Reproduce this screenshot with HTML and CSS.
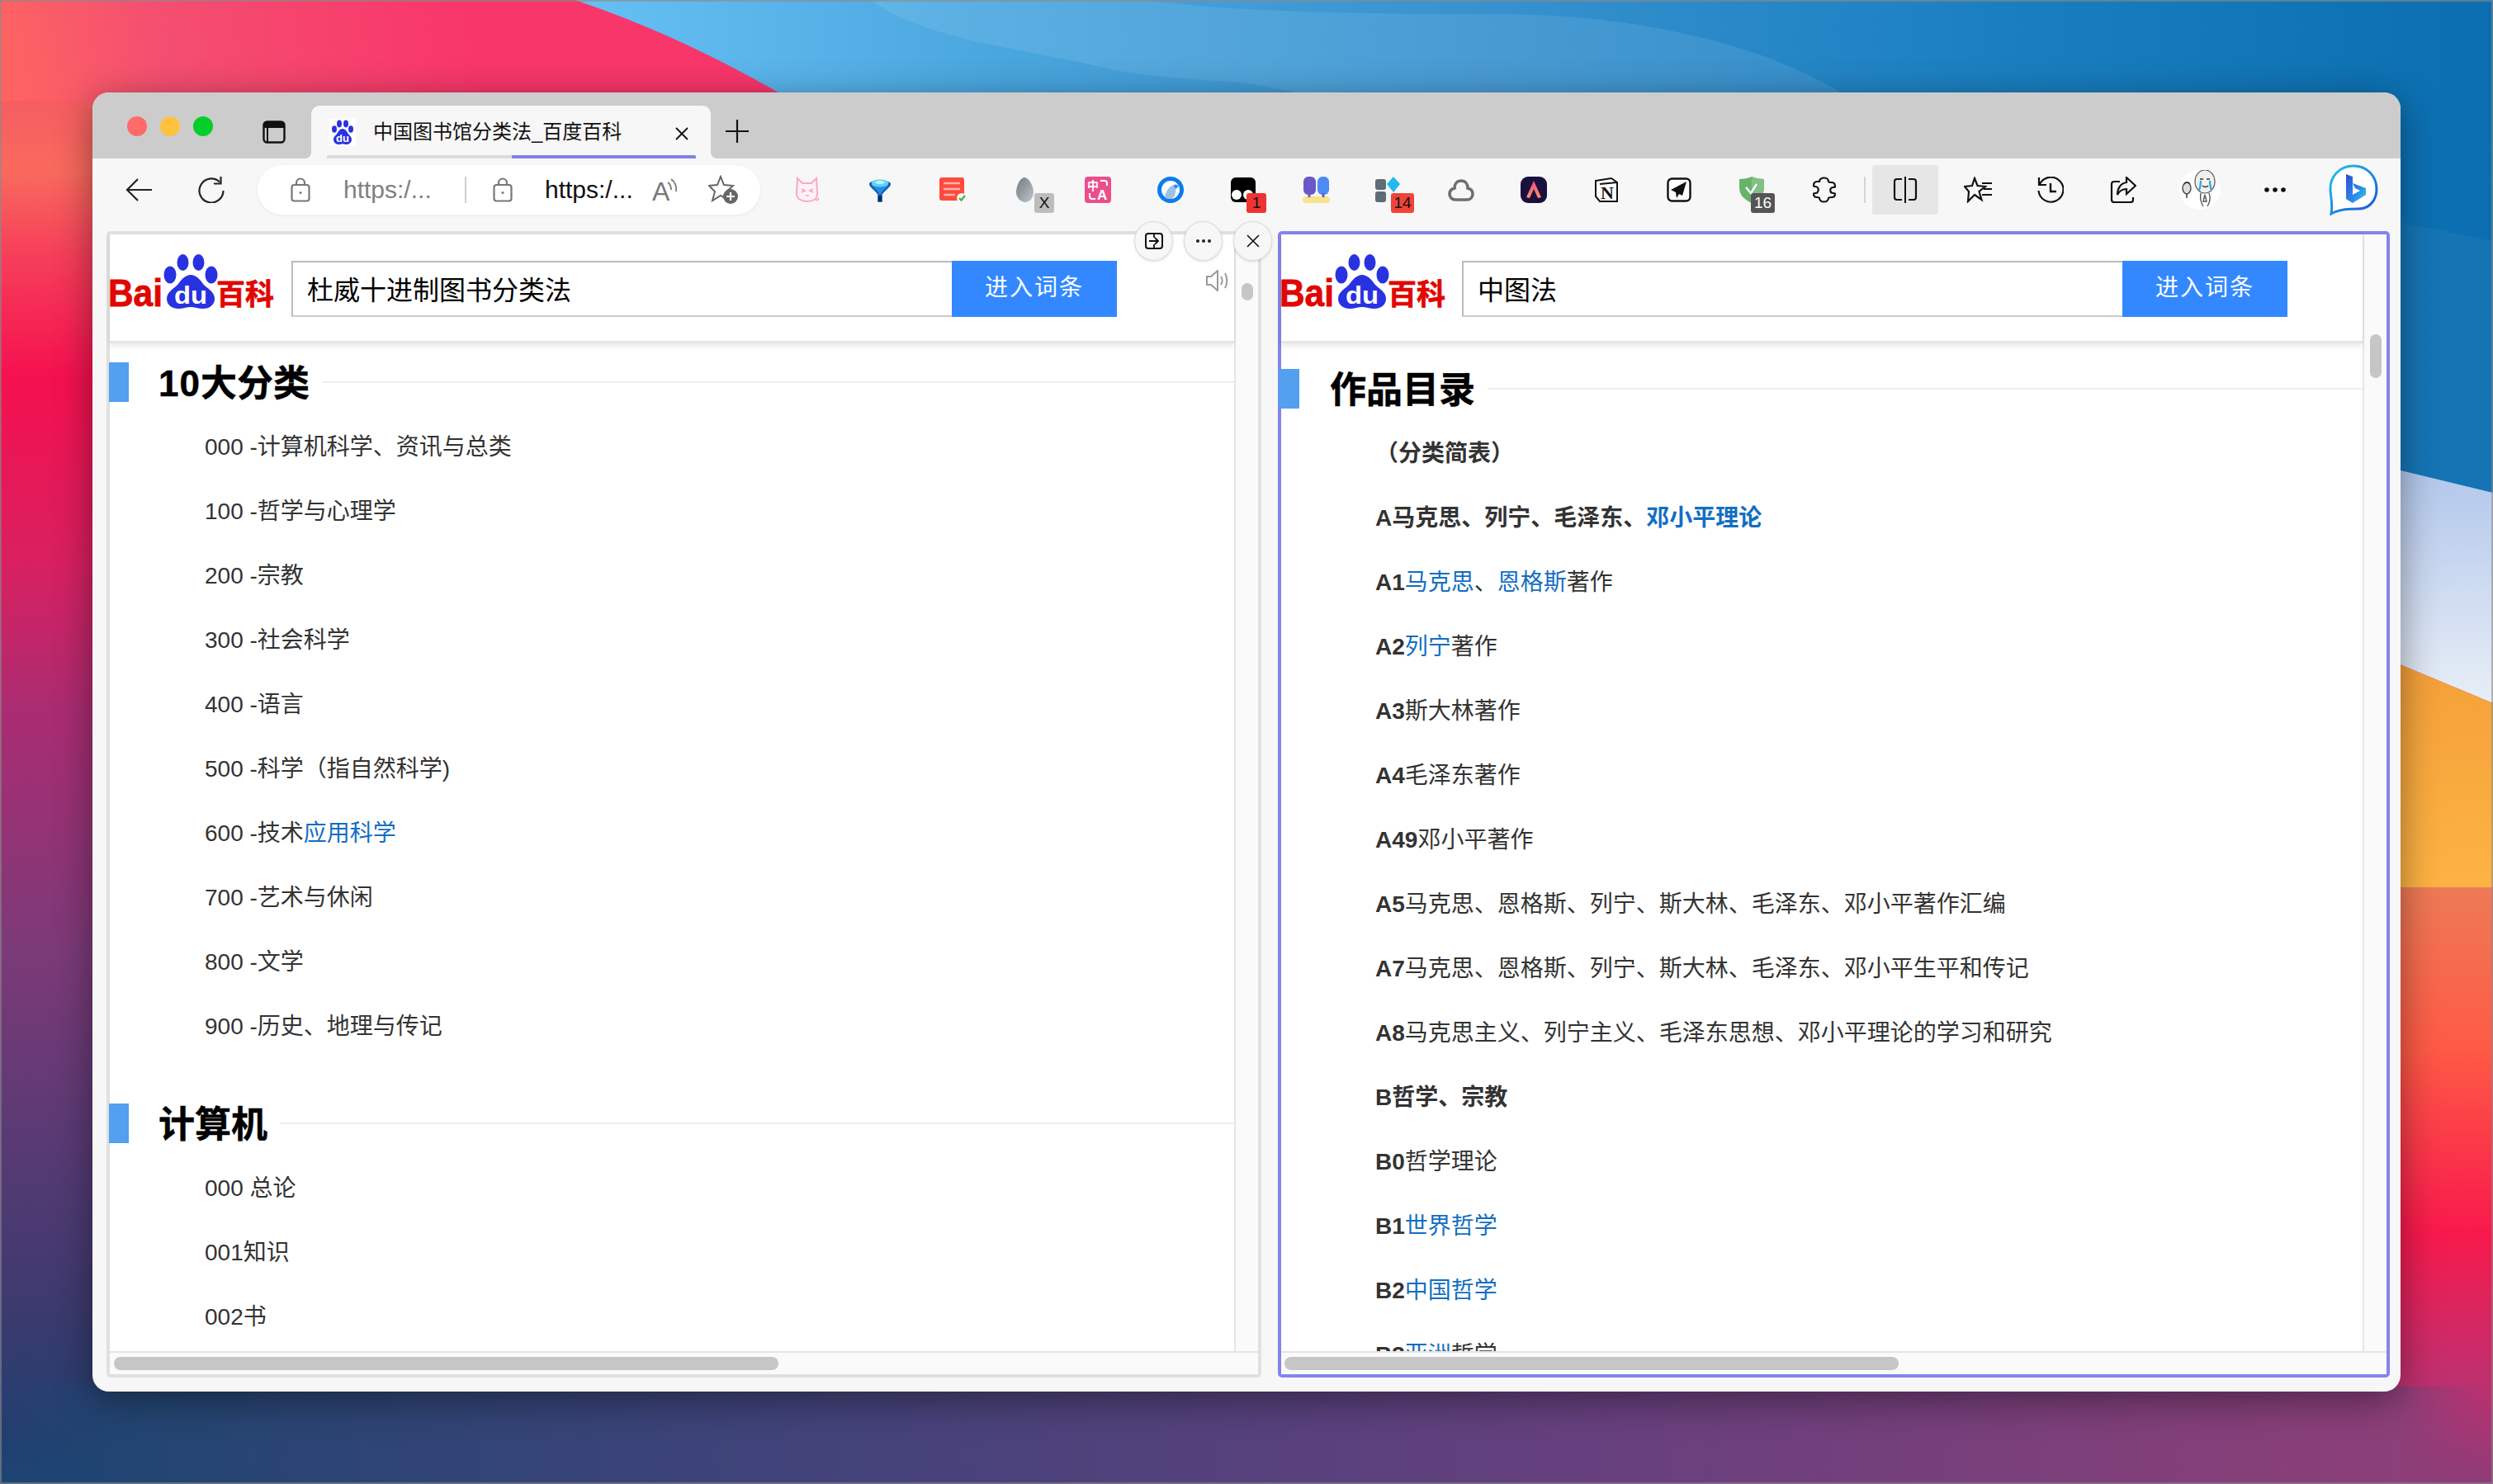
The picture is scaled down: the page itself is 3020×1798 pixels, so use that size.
FILE: index.html
```html
<!DOCTYPE html>
<html lang="zh">
<head>
<meta charset="utf-8">
<title>中国图书馆分类法_百度百科</title>
<link rel="stylesheet" href="styles.css">
</head>
<body>
<div class="desktop">
  <svg class="wallpaper" viewBox="0 0 3020 1798" aria-hidden="true">
    <defs>
      <linearGradient id="wpLeft" x1="0" y1="0" x2="0" y2="1">
        <stop offset="0" stop-color="#f04a6a"/><stop offset=".115" stop-color="#f96a5c"/><stop offset=".17" stop-color="#f6405a"/><stop offset=".255" stop-color="#f5104f"/><stop offset=".38" stop-color="#d82060"/><stop offset=".48" stop-color="#aa2c72"/><stop offset=".64" stop-color="#7c3a78"/><stop offset=".765" stop-color="#5a3a74"/><stop offset=".89" stop-color="#3a3a6e"/><stop offset=".975" stop-color="#1f4070"/><stop offset="1" stop-color="#1e4573"/>
      </linearGradient>
      <linearGradient id="wpBlue" gradientUnits="userSpaceOnUse" x1="700" y1="0" x2="3020" y2="0">
        <stop offset="0" stop-color="#66c0f5"/><stop offset=".22" stop-color="#4aa6de"/><stop offset=".48" stop-color="#3691cf"/><stop offset=".74" stop-color="#1a7fc0"/><stop offset="1" stop-color="#0a6eb0"/>
      </linearGradient>
      <linearGradient id="wpRed" gradientUnits="userSpaceOnUse" x1="0" y1="115" x2="560" y2="0">
        <stop offset="0" stop-color="#ff6560"/><stop offset=".35" stop-color="#f44f70"/><stop offset="1" stop-color="#f8366a"/>
      </linearGradient>
      <linearGradient id="wpSky" x1="0" y1="0" x2="0" y2="1">
        <stop offset="0" stop-color="#b2c7ec"/><stop offset="1" stop-color="#e8eef6"/>
      </linearGradient>
      <linearGradient id="wpOrange" x1="0" y1="0" x2="0" y2="1">
        <stop offset="0" stop-color="#f4a03a"/><stop offset="1" stop-color="#fdb343"/>
      </linearGradient>
      <linearGradient id="wpWarm" x1="0" y1="0" x2="0" y2="1">
        <stop offset="0" stop-color="#ee7a55"/><stop offset=".27" stop-color="#fe5a45"/><stop offset=".58" stop-color="#f8194c"/><stop offset=".82" stop-color="#c02f6e"/><stop offset="1" stop-color="#8d3c78"/>
      </linearGradient>
      <linearGradient id="wpBottom" x1="0" y1="0" x2="1" y2="0">
        <stop offset="0" stop-color="#1e4573" stop-opacity="0"/><stop offset=".05" stop-color="#234572"/><stop offset=".33" stop-color="#43437a"/><stop offset=".63" stop-color="#65407e"/><stop offset=".965" stop-color="#8c3f78"/><stop offset="1" stop-color="#8d3c78" stop-opacity="0"/>
      </linearGradient>
    </defs>
    <rect width="3020" height="1798" fill="url(#wpLeft)"/>
    <rect x="680" width="2340" height="600" fill="url(#wpBlue)"/>
    <path d="M1055 0C1120 50 1252 60 1350 85C1420 96 1480 98 1503 100C1540 105 1570 112 1590 118H2240C2150 60 2000 17 1811 17C1650 17 1500 15 1387 0Z" fill="#fff" opacity=".09"/>
    <path d="M0 0H697Q830 45 960 122H0Z" fill="url(#wpRed)"/>
    <path d="M2900 268L3020 292V600H2900Z" fill="#fff" opacity=".04"/>
    <path d="M2900 568L3020 597V852L2900 802Z" fill="url(#wpSky)"/>
    <path d="M2900 802L3020 852V1076H2900Z" fill="url(#wpOrange)"/>
    <rect x="2900" y="1075" width="120" height="723" fill="url(#wpWarm)"/>
    <rect x="20" y="1680" width="2990" height="118" fill="url(#wpBottom)"/>
    <rect width="3020" height="1798" fill="none" stroke="#8a8a8a" stroke-opacity=".6" stroke-width="4"/>
  </svg>

  <div class="window">
    <div class="tabstrip">
      <div class="lights">
        <span class="light light-red"></span>
        <span class="light light-yellow"></span>
        <span class="light light-green"></span>
      </div>
      <svg class="panel-icon" viewBox="0 0 28 28"><rect x="1.500" y="1.500" width="25" height="25" rx="4" fill="none" stroke="#111" stroke-width="2.400"/><path d="M1.500 9V5.500a4 4 0 0 1 4-4h17a4 4 0 0 1 4 4V9Z" fill="#111"/><path d="M6 9v17" stroke="#111" stroke-width="2"/></svg>
      <div class="tab">
        <svg class="favicon" viewBox="0 0 32 32"><rect width="32" height="32" fill="#fff"/><ellipse cx="12" cy="6" rx="3" ry="4.400" fill="#2932e1"/><ellipse cx="20" cy="6" rx="3" ry="4.400" fill="#2932e1"/><ellipse cx="6" cy="12.500" rx="3" ry="4.200" fill="#2932e1"/><ellipse cx="26" cy="12.500" rx="3" ry="4.200" fill="#2932e1"/><path d="M16 12c3 0 5 3 6.500 5.500 1.500 2.500 4.500 4 4.500 7.500 0 3.500-3 6-6 6-2 0-3.500-.8-5-.8s-3 .8-5 .8c-3 0-6-2.500-6-6 0-3.500 3-5 4.500-7.500C11 15 13 12 16 12Z" fill="#2932e1"/><text x="16" y="28" class="fav-du">du</text></svg>
        <span class="tab-title">中国图书馆分类法_百度百科</span>
        <svg class="tab-close" viewBox="0 0 16 16"><path d="M1 1l14 14M15 1L1 15" stroke="#111" stroke-width="1.800" fill="none"/></svg>
        <div class="tab-progress"><span class="tab-progress-fill"></span></div>
      </div>
      <svg class="new-tab" viewBox="0 0 28 28"><path d="M14 0v28M0 14h28" stroke="#111" stroke-width="2.200"/></svg>
    </div>

    <div class="toolbar">
      <div class="tb-item"><svg width="32" height="28" viewBox="0 0 32 28"><path d="M15 1L2 14l13 13M2 14h30" fill="none" stroke="#222" stroke-width="2.200"/></svg></div>
      <div class="tb-item"><svg width="32" height="32" viewBox="0 0 32 32"><path d="M26 6.500A14.500 14.500 0 1 0 30.500 17" fill="none" stroke="#222" stroke-width="2.200"/><path d="M27.500 0v8.500H19" fill="none" stroke="#222" stroke-width="2.200"/></svg></div>

      <div class="address">
        <svg class="lock" viewBox="0 0 24 30"><rect x="1.500" y="9" width="21" height="19.500" rx="3" fill="none" stroke="#777" stroke-width="2.200"/><path d="M7 9V6.500a5 5 0 0 1 10 0V9" fill="none" stroke="#777" stroke-width="2.200"/><circle cx="12" cy="18.500" r="1.500" fill="#777"/></svg>
        <span class="addr-text addr-dim">https:/...</span>
        <span class="addr-sep"></span>
        <svg class="lock" viewBox="0 0 24 30"><rect x="1.500" y="9" width="21" height="19.500" rx="3" fill="none" stroke="#777" stroke-width="2.200"/><path d="M7 9V6.500a5 5 0 0 1 10 0V9" fill="none" stroke="#777" stroke-width="2.200"/><circle cx="12" cy="18.500" r="1.500" fill="#777"/></svg>
        <span class="addr-text addr-main">https:/...</span>
        <svg class="read-aloud" viewBox="0 -4 32 40"><text x="0" y="27" class="aloud-a">A</text><path d="M19 5c3 2 4 5 4 9M23 1c4 3 7 8 6 15" fill="none" stroke="#777" stroke-width="1.800"/></svg>
        <svg class="fav-add" viewBox="0 0 36 36"><path d="M15 2l4 10 11 1-8 7 3 11-10-6-10 6 3-11-7-7 10-1Z" fill="none" stroke="#666" stroke-width="2"/><circle cx="27" cy="26" r="9" fill="#666"/><path d="M27 21v10M22 26h10" stroke="#fff" stroke-width="2.200"/></svg>
      </div>

      <div class="tb-item tb-first"><svg width="30" height="32" viewBox="0 0 30 32"><path d="M3 2l6 6h11l6-6 1 19c0 6-5 9-12 9S2 27 2 21Z" fill="#fff3f7" stroke="#ffa6c2" stroke-width="2"/><path d="M8 15l4 2-4 2M22 15l-4 2 4 2M13 23h4" fill="none" stroke="#ff9ab9" stroke-width="1.600"/><path d="M25 28c2 1 3 0 4-2" fill="none" stroke="#ffa6c2" stroke-width="2"/></svg></div>
      <div class="tb-item"><svg width="28" height="30" viewBox="0 0 28 30"><path d="M1 8C1 2 27 2 27 8 27 12 19 16 16.500 21V29.500H11.500V21C9 16 1 12 1 8Z" fill="#0b55b8"/><path d="M3 9C8 14 12 17 14 22 16 17 20 14 25 9Z" fill="#1f8fe6"/><path d="M11.500 22H16.500V29.500H11.500Z" fill="#0a2f63"/><ellipse cx="14" cy="7" rx="10.500" ry="4.500" fill="#5fd0f6"/><ellipse cx="14" cy="6" rx="6" ry="2.200" fill="#bdeeff"/></svg></div>
      <div class="tb-item"><svg width="34" height="32" viewBox="0 0 34 32"><rect x="1" y="1" width="30" height="28" rx="3" fill="#ff4a3c"/><path d="M6 8h20M6 15h20M6 22h14" stroke="#ffb5ab" stroke-width="2.400"/><circle cx="28" cy="26" r="6" fill="#f7f7f7"/><path d="M25 26l2.500 2.500L32 23" fill="none" stroke="#4cb050" stroke-width="2.400"/></svg></div>
      <div class="tb-item"><svg width="22" height="30" viewBox="0 0 22 30"><defs><linearGradient id="eggGrad" x1="0" y1="0" x2="1" y2="1"><stop offset="0" stop-color="#707a80"/><stop offset="1" stop-color="#c2c6c9"/></linearGradient></defs><path d="M10 0c5 0 11 10 11 18 0 7-5 12-10 12S0 25 0 18C0 10 5 0 10 0Z" fill="url(#eggGrad)"/></svg><span class="badge badge-grey">X</span></div>
      <div class="tb-item"><svg width="32" height="32" viewBox="0 0 32 32"><rect width="32" height="32" rx="4" fill="#ec4e8c"/><text x="3" y="16" class="pink-cn">中</text><text x="15" y="28" class="pink-en">A</text><path d="M19 5h5q3 0 3 3v3" fill="none" stroke="#fff" stroke-width="2"/><path d="M6 20v4q0 3 3 3h4" fill="none" stroke="#fff" stroke-width="2"/></svg></div>
      <div class="tb-item"><svg width="32" height="32" viewBox="0 0 32 32"><circle cx="16" cy="16" r="16" fill="#0c7bef"/><circle cx="16" cy="16" r="11" fill="#fff"/><path d="M9 25c1-8 6-14 13-16 2 0 4 1 5 4-3 0-5 2-5 5 0 4-2 8-5 9-3 0-6 0-8-2Z" fill="#9cc2e6"/><path d="M20 11c2-1 4 0 5 1l-3 2Z" fill="#0c7bef"/></svg></div>
      <div class="tb-item"><svg width="30" height="30" viewBox="0 0 30 30"><rect width="30" height="30" rx="6" fill="#000"/><circle cx="7" cy="21" r="6" fill="#fff"/><circle cx="21" cy="21" r="6" fill="#fff"/></svg><span class="badge badge-red">1</span></div>
      <div class="tb-item"><svg width="33" height="32" viewBox="0 0 33 32"><rect x="1" width="15" height="22" rx="6" fill="#6a58c6"/><rect x="18" width="14" height="22" rx="6" fill="#4b8cf0"/><rect y="24" width="33" height="8" rx="4" fill="#fbe28c"/><path d="M8 20v5M25 20v5" stroke="#6a58c6" stroke-width="3"/></svg></div>
      <div class="tb-item"><svg width="32" height="32" viewBox="0 0 32 32"><rect y="3" width="13" height="13" rx="3" fill="#5f6b75"/><rect y="18" width="13" height="13" rx="3" fill="#5f6b75"/><path d="M22 0l8 9-8 10-8-10Z" fill="#22b8f0"/></svg><span class="badge badge-orange">14</span></div>
      <div class="tb-item"><svg width="32" height="27" viewBox="0 0 32 27"><path d="M16 2c5 0 8 4 8 9 4 1 6 4 6 7 0 4-3 7-7 7H9c-4 0-7-3-7-7 0-3 2-6 6-7 0-5 3-9 8-9Z" fill="none" stroke="#6f6f6f" stroke-width="3.600"/></svg></div>
      <div class="tb-item"><svg width="32" height="32" viewBox="0 0 32 32"><defs><linearGradient id="arcGrad" x1="0" y1="0" x2="0" y2="1"><stop offset="0" stop-color="#f04b7a"/><stop offset="1" stop-color="#fb9368"/></linearGradient></defs><rect width="32" height="32" rx="9" fill="#1a1040"/><path d="M16 5l9 20-4 1-5-11-5 11-4-1Z" fill="url(#arcGrad)"/></svg></div>
      <div class="tb-item"><svg width="30" height="32" viewBox="0 0 30 32"><path d="M2 5l19-3 7 5v23H7l-5-6Z" fill="#fff" stroke="#111" stroke-width="2"/><path d="M7 9l21-2" stroke="#111" stroke-width="2"/><text x="8" y="27" class="notion-n">N</text></svg></div>
      <div class="tb-item"><svg width="30" height="30" viewBox="0 0 30 30"><rect x="1.500" y="1.500" width="27" height="27" rx="5" fill="#fff" stroke="#111" stroke-width="2.400"/><path d="M24 5L5 15l6 3 1 7 3-5 4 2Z" fill="#111"/></svg></div>
      <div class="tb-item"><svg width="32" height="32" viewBox="0 0 32 32"><path d="M1 3c5 0 11-1 15-3 4 2 10 3 15 3v10c0 9-6 15-15 19C7 28 1 22 1 13Z" fill="#68b36a"/><path d="M16 0c4 2 10 3 15 3v10c0 9-6 15-15 19Z" fill="#82c085"/><path d="M9 13l6 7 7-11" fill="none" stroke="#fff" stroke-width="2.400"/></svg><span class="badge badge-dark">16</span></div>
      <div class="tb-item"><svg width="30" height="32" viewBox="0 0 30 32"><path d="M9 6c0-6 11-6 11 0 0 1 2 1 4 1 3 0 4 2 4 5 0 1-1 1-2 1-5 0-5 7 0 7 1 0 2 0 2 1 0 3-1 4-4 4-2 0-4 0-4 1 0 6-11 6-11 0 0-1-1-1-3-1-3 0-4-2-4-4 0-1 1-1 2-1 5 0 5-8 0-8-1 0-2 0-2-1 0-3 1-5 4-5 2 0 3 0 3 0Z" fill="none" stroke="#111" stroke-width="2.200"/></svg></div>
      <span class="tb-sep"></span>
      <div class="tb-item tb-active"><svg width="30" height="32" viewBox="0 0 30 32"><path d="M11 3H5a3 3 0 0 0-3 3v19a3 3 0 0 0 3 3h6M19 3h6a3 3 0 0 1 3 3v19a3 3 0 0 1-3 3h-6" fill="none" stroke="#111" stroke-width="2.200"/><path d="M15 0v32" stroke="#111" stroke-width="2"/></svg></div>
      <div class="tb-item tb-after-split"><svg width="34" height="32" viewBox="0 0 34 32"><path d="M13 2l3.500 9 9.500 1-7.500 6 3 10-8.500-6-8 8 1-12-5-6 9-1Z" fill="none" stroke="#111" stroke-width="2.200"/><path d="M22 8h12M24 15h10M22 22h12" stroke="#111" stroke-width="2.200"/></svg></div>
      <div class="tb-item"><svg width="32" height="32" viewBox="0 0 32 32"><path d="M3 9A15 15 0 1 1 1.500 17" fill="none" stroke="#111" stroke-width="2.200"/><path d="M2 1v9h9" fill="none" stroke="#111" stroke-width="2.200"/><path d="M16 8v10h7" fill="none" stroke="#111" stroke-width="2.400"/></svg></div>
      <div class="tb-item"><svg width="32" height="32" viewBox="0 0 32 32"><path d="M12 6H5a3 3 0 0 0-3 3v19a3 3 0 0 0 3 3h20a3 3 0 0 0 3-3v-3" fill="none" stroke="#111" stroke-width="2.200"/><path d="M20 1l11 10-11 10v-6c-6 0-9 3-11 7 0-8 4-14 11-15Z" fill="none" stroke="#111" stroke-width="2.200"/></svg></div>
      <div class="tb-item tb-avatar"><svg width="50" height="48" viewBox="0 0 50 48"><ellipse cx="25" cy="24" rx="25" ry="24" fill="#fff"/><ellipse cx="31" cy="14" rx="12" ry="14" fill="#f1f1ec" stroke="#555" stroke-width="1.200"/><path d="M25 11h4M33 11h4M28 19c2 2 5 2 7 0" fill="none" stroke="#333" stroke-width="1.400"/><path d="M26 13c0 5-1 9-2 12M37 13c0 5 1 9 2 11" fill="none" stroke="#2aa3ee" stroke-width="2.200"/><path d="M26 28c-1 5 0 11 3 16M36 28c2 5 1 11-2 16M31 30l-2 8 4 0Z" fill="none" stroke="#555" stroke-width="1.400"/><ellipse cx="9" cy="22" rx="5" ry="7" fill="#ddd" stroke="#444" stroke-width="1.400"/><path d="M6 17c2-3 5-3 7 0M9 29v5" fill="none" stroke="#333" stroke-width="1.400"/></svg></div>
      <div class="tb-item tb-dots"><svg width="28" height="8" viewBox="0 0 28 8"><circle cx="4" cy="4" r="2.800" fill="#111"/><circle cx="14" cy="4" r="2.800" fill="#111"/><circle cx="24" cy="4" r="2.800" fill="#111"/></svg></div>
      <div class="tb-item tb-bing"><svg width="60" height="62" viewBox="0 0 60 62"><defs><linearGradient id="bingEdge" x1="0" y1="0" x2="1" y2="1"><stop offset="0" stop-color="#22c6ee"/><stop offset="1" stop-color="#1c4fd0"/></linearGradient><linearGradient id="bingB" x1="0" y1="0" x2="1" y2="1"><stop offset="0" stop-color="#2a4fd8"/><stop offset=".6" stop-color="#2a8ae8"/><stop offset="1" stop-color="#35d2e6"/></linearGradient></defs><path d="M30 2C46 2 58 14 58 30 58 45 48 54 36 54 26 54 13 54 3 60 5 50 3 44 2 32 1 14 14 2 30 2Z" fill="#fff" stroke="url(#bingEdge)" stroke-width="3"/><path d="M21 12l8 3v22l9-5-6-3-3-6 16 6v8L29 47l-8-5Z" fill="url(#bingB)"/></svg></div>
    </div>

    <div class="panes">
      <section class="pane pane-left">
        <div class="pane-main">
          <div class="viewport">
            <header class="pane-header">
              <svg class="logo" viewBox="0 0 201 78"><text x="0" y="63" class="logo-bai" textLength="66" lengthAdjust="spacingAndGlyphs">Bai</text><ellipse cx="90.500" cy="10" rx="7" ry="10" fill="#2932e1"/><ellipse cx="109.500" cy="10" rx="7" ry="10" fill="#2932e1"/><ellipse cx="75" cy="25" rx="7.500" ry="10.500" fill="#2932e1"/><ellipse cx="125" cy="25" rx="7.500" ry="10.500" fill="#2932e1"/><path d="M100 25c6 0 11 5 15 11 4 5 14 9 14 18 0 8-7 12-14 12-6 0-10-2-15-2s-9 2-15 2c-7 0-14-4-14-12 0-9 10-13 14-18 4-6 9-11 15-11Z" fill="#2932e1"/><text x="100" y="60" class="logo-du" textLength="40" lengthAdjust="spacingAndGlyphs">du</text><text x="131" y="61" class="logo-cn">百科</text></svg>
              <div class="search-input">杜威十进制图书分类法</div>
              <div class="search-button">进入词条</div>
              <svg class="speaker" viewBox="0 0 30 26"><path d="M2 8h5l8-7v24l-8-7H2Z" fill="none" stroke="#999" stroke-width="2"/><path d="M19 8c2 3 2 7 0 10M24 4c3 5 3 13 0 18" fill="none" stroke="#999" stroke-width="2"/></svg>
            </header>
            <div class="article article-left">
              <h2 class="heading"><span class="marker"></span><span class="heading-text"><span class="heading-num">10</span>大分类</span><span class="heading-line"></span></h2>
              <p class="row">000 -计算机科学、资讯与总类</p>
              <p class="row">100 -哲学与心理学</p>
              <p class="row">200 -宗教</p>
              <p class="row">300 -社会科学</p>
              <p class="row">400 -语言</p>
              <p class="row">500 -科学（指自然科学)</p>
              <p class="row">600 -技术<a class="link">应用科学</a></p>
              <p class="row">700 -艺术与休闲</p>
              <p class="row">800 -文学</p>
              <p class="row">900 -历史、地理与传记</p>
              <h2 class="heading heading-second"><span class="marker"></span><span class="heading-text">计算机</span><span class="heading-line"></span></h2>
              <p class="row">000 总论</p>
              <p class="row">001知识</p>
              <p class="row">002书</p>
            </div>
          </div>
          <div class="vtrack"><span class="vthumb vthumb-left"></span></div>
        </div>
        <div class="htrack"><span class="hthumb hthumb-left"></span></div>
      </section>

      <section class="pane pane-right">
        <div class="pane-main">
          <div class="viewport">
            <header class="pane-header">
              <svg class="logo" viewBox="0 0 201 78"><text x="0" y="63" class="logo-bai" textLength="66" lengthAdjust="spacingAndGlyphs">Bai</text><ellipse cx="90.500" cy="10" rx="7" ry="10" fill="#2932e1"/><ellipse cx="109.500" cy="10" rx="7" ry="10" fill="#2932e1"/><ellipse cx="75" cy="25" rx="7.500" ry="10.500" fill="#2932e1"/><ellipse cx="125" cy="25" rx="7.500" ry="10.500" fill="#2932e1"/><path d="M100 25c6 0 11 5 15 11 4 5 14 9 14 18 0 8-7 12-14 12-6 0-10-2-15-2s-9 2-15 2c-7 0-14-4-14-12 0-9 10-13 14-18 4-6 9-11 15-11Z" fill="#2932e1"/><text x="100" y="60" class="logo-du" textLength="40" lengthAdjust="spacingAndGlyphs">du</text><text x="131" y="61" class="logo-cn">百科</text></svg>
              <div class="search-input">中图法</div>
              <div class="search-button">进入词条</div>
            </header>
            <div class="article article-right">
              <h2 class="heading"><span class="marker"></span><span class="heading-text">作品目录</span><span class="heading-line"></span></h2>
              <p class="row row-strong">（分类简表）</p>
              <p class="row row-strong">A马克思、列宁、毛泽东、<a class="link">邓小平理论</a></p>
              <p class="row"><b>A1</b><a class="link">马克思</a>、<a class="link">恩格斯</a>著作</p>
              <p class="row"><b>A2</b><a class="link">列宁</a>著作</p>
              <p class="row"><b>A3</b>斯大林著作</p>
              <p class="row"><b>A4</b>毛泽东著作</p>
              <p class="row"><b>A49</b>邓小平著作</p>
              <p class="row"><b>A5</b>马克思、恩格斯、列宁、斯大林、毛泽东、邓小平著作汇编</p>
              <p class="row"><b>A7</b>马克思、恩格斯、列宁、斯大林、毛泽东、邓小平生平和传记</p>
              <p class="row"><b>A8</b>马克思主义、列宁主义、毛泽东思想、邓小平理论的学习和研究</p>
              <p class="row row-strong">B哲学、宗教</p>
              <p class="row"><b>B0</b>哲学理论</p>
              <p class="row"><b>B1</b><a class="link">世界哲学</a></p>
              <p class="row"><b>B2</b><a class="link">中国哲学</a></p>
              <p class="row"><b>B3</b><a class="link">亚洲</a>哲学</p>
            </div>
          </div>
          <div class="vtrack"><span class="vthumb vthumb-right"></span></div>
        </div>
        <div class="htrack"><span class="hthumb hthumb-right"></span></div>
      </section>
    </div>

    <div class="float-actions">
      <span class="float-btn"><svg width="22" height="20" viewBox="0 0 22 20"><rect x="1" y="1" width="20" height="18" rx="3" fill="none" stroke="#111" stroke-width="2"/><path d="M11 1v5M11 14v5M5 10h11M12 6l4 4-4 4" fill="none" stroke="#111" stroke-width="1.800"/></svg></span>
      <span class="float-btn"><svg width="20" height="6" viewBox="0 0 20 6"><circle cx="3" cy="3" r="2" fill="#222"/><circle cx="10" cy="3" r="2" fill="#222"/><circle cx="17" cy="3" r="2" fill="#222"/></svg></span>
      <span class="float-btn"><svg width="16" height="16" viewBox="0 0 16 16"><path d="M1 1l14 14M15 1L1 15" stroke="#111" stroke-width="1.600" fill="none"/></svg></span>
    </div>
  </div>
</div>
</body>
</html>
```
FILE: styles.css
```css
* { box-sizing: border-box; }
html, body { margin: 0; padding: 0; }
body {
  font-family: "Liberation Sans", "Noto Sans CJK SC", sans-serif;
  color: #333;
}
.desktop {
  position: relative;
  width: 3020px;
  height: 1798px;
  overflow: hidden;
}
.wallpaper { position: absolute; inset: 0; width: 3020px; height: 1798px; display: block; }

/* window */
.window {
  position: absolute;
  left: 112px;
  top: 112px;
  width: 2796px;
  height: 1574px;
  border-radius: 20px;
  background: #f7f7f7;
  box-shadow: 0 10px 46px rgba(0, 0, 0, .42);
  display: flex;
  flex-direction: column;
  overflow: hidden;
}

/* tab strip */
.tabstrip {
  height: 80px;
  flex: none;
  background: #ccc;
  display: flex;
  align-items: flex-start;
  padding-left: 42px;
}
.lights { display: flex; gap: 16px; margin-top: 29px; }
.light { width: 24px; height: 24px; border-radius: 50%; }
.light-red { background: #ff6a6a; }
.light-yellow { background: #fec23f; }
.light-green { background: #03cf2b; }
.panel-icon { width: 28px; height: 28px; margin: 34px 0 0 60px; flex: none; }
.tab {
  position: relative;
  width: 484px;
  height: 64px;
  margin: 16px 0 0 31px;
  padding: 0 24px 0 22px;
  background: #f7f7f7;
  border-radius: 10px 10px 0 0;
  display: flex;
  align-items: center;
  flex: none;
}
.tab::before, .tab::after {
  content: "";
  position: absolute;
  bottom: 0;
  width: 8px;
  height: 8px;
}
.tab::before { left: -8px; background: radial-gradient(circle at 0 0, transparent 8px, #f7f7f7 8px); }
.tab::after { right: -8px; background: radial-gradient(circle at 100% 0, transparent 8px, #f7f7f7 8px); }
.favicon { width: 32px; height: 32px; flex: none; }
.fav-du { font: bold 13px "Liberation Sans", sans-serif; fill: #fff; text-anchor: middle; }
.tab-title { margin-left: 21px; font-size: 24px; line-height: 32px; color: #111; white-space: nowrap; }
.tab-close { width: 16px; height: 16px; margin-left: auto; margin-right: 3px; margin-top: 4px; flex: none; }
.tab-progress {
  position: absolute;
  left: 19px;
  bottom: 0;
  width: 447px;
  height: 4px;
  background: #dcdcdc;
  border-radius: 2px 2px 0 0;
  overflow: hidden;
  display: flex;
  justify-content: flex-end;
}
.tab-progress-fill { width: 223px; background: #8080ea; }
.new-tab { width: 28px; height: 28px; margin: 33px 0 0 18px; flex: none; }

/* toolbar */
.toolbar {
  height: 88px;
  flex: none;
  padding: 8px 0 0 12px;
  display: flex;
  align-items: flex-start;
  background: #f7f7f7;
}
.tb-item {
  position: relative;
  width: 88px;
  height: 60px;
  flex: none;
  display: flex;
  align-items: center;
  justify-content: center;
}
.tb-first { margin-left: 13px; }
.tb-sep { width: 2px; height: 32px; margin: 14px 8px 0 4px; background: #d4d4d4; flex: none; }
.tb-active { width: 80px; background: #e6e6e6; border-radius: 4px; }
.tb-after-split { margin-left: 4px; }
.tb-avatar { width: 98px; }
.tb-dots { width: 84px; }
.tb-bing { width: 106px; }
.badge {
  position: absolute;
  top: 34px;
  height: 24px;
  min-width: 24px;
  padding: 0 3px;
  border-radius: 3px;
  font-size: 19px;
  line-height: 24px;
  text-align: center;
}
.badge-grey { left: 55px; background: #bdbdbd; color: #111; }
.badge-red { left: 48px; background: #ef3333; color: #111; }
.badge-orange { left: 47px; background: #f0443a; color: #111; width: 28px; }
.badge-dark { left: 43px; background: #555; color: #fff; width: 29px; }

.address {
  width: 609px;
  height: 60px;
  flex: none;
  margin-left: 12px;
  background: #fff;
  border-radius: 30px;
  display: flex;
  align-items: center;
  padding-left: 40px;
  box-shadow: 0 1px 4px rgba(0, 0, 0, .06);
}
.lock { width: 24px; height: 30px; flex: none; }
.addr-text { font-size: 30px; line-height: 40px; color: #111; white-space: nowrap; width: 108px; flex: none; }
.addr-dim { margin-left: 40px; color: #808080; }
.addr-main { margin-left: 39px; }
.addr-sep { width: 2px; height: 32px; background: #cfcfcf; margin: 0 32px 0 39px; flex: none; }
.read-aloud { width: 32px; height: 40px; margin: 4px 0 0 22px; flex: none; }
.aloud-a { font: 300 32px "Liberation Sans", sans-serif; fill: #777; }
.fav-add { width: 36px; height: 36px; margin-left: 36px; flex: none; }
.pink-cn { font: bold 14px "Noto Sans CJK SC", sans-serif; fill: #fff; }
.pink-en { font: bold 17px "Liberation Sans", sans-serif; fill: #fff; }
.notion-n { font: bold 22px "Liberation Serif", serif; fill: #111; }

/* panes */
.panes {
  flex: 1;
  min-height: 0;
  display: flex;
  gap: 20px;
  padding: 0 13px 17px 17px;
}
.pane {
  display: flex;
  flex-direction: column;
  border: 4px solid #e0e0e0;
  border-radius: 5px;
  background: #fafafa;
}
.pane-left { width: 1399px; flex: none; }
.pane-right { width: 1347px; flex: none; border-color: #8484ec; }
.pane-main { flex: 1; min-height: 0; display: flex; }
.viewport {
  flex: 1;
  min-width: 0;
  background: #fff;
  clip-path: inset(-4px 0 0 -4px);
  border-right: 2px solid #e6e6e6;
}
.vtrack { width: 27px; flex: none; background: #fafafa; display: flex; justify-content: center; }
.vthumb { width: 14px; border-radius: 7px; background: #c6c6c6; }
.vthumb-left { height: 21px; margin-top: 59px; }
.vthumb-right { height: 53px; margin-top: 121px; }
.htrack { height: 28px; flex: none; padding-top: 5px; background: #fafafa; border-top: 2px solid #e4e4e4; display: flex; }
.hthumb { height: 16px; border-radius: 8px; background: #c6c6c6; }
.hthumb-left { width: 805px; margin-left: 5px; }
.hthumb-right { width: 744px; margin-left: 4px; }

.pane-header {
  position: relative;
  height: 132px;
  padding-top: 32px;
  display: flex;
  align-items: flex-start;
  background: #fff;
  border-bottom: 3px solid #e6e6e6;
  box-shadow: 0 3px 7px rgba(0, 0, 0, .1);
}
.logo { width: 201px; height: 78px; margin: -8px 21px 0 -2px; flex: none; }
.pane-right .logo { margin-right: 20px; }
.logo-bai { font: bold 46px "Liberation Sans", sans-serif; fill: #e10601; stroke: #e10601; stroke-width: .8px; }
.logo-du { font: bold 30px "Liberation Sans", sans-serif; fill: #fff; text-anchor: middle; }
.logo-cn { font: bold 35px "Noto Sans CJK SC", sans-serif; fill: #e10601; stroke: #e10601; stroke-width: .7px; }
.search-input {
  width: 800px;
  height: 68px;
  flex: none;
  border: 2px solid #bbb;
  border-right: 0;
  border-bottom-color: #ccc;
  padding-left: 17px;
  font-size: 32px;
  line-height: 68px;
  color: #000;
}
.search-button {
  width: 200px;
  height: 68px;
  flex: none;
  background: #3388ff;
  color: #fff;
  font-size: 28px;
  letter-spacing: 2px;
  line-height: 66px;
  text-align: center;
}
.speaker { position: absolute; left: 1327px; top: 43px; width: 30px; height: 26px; }

/* article */
.article { background: #fff; }
.article-left { padding-top: 23px; }
.article-right { padding-top: 31px; }
.heading {
  height: 48px;
  margin: 0 0 15px;
  display: flex;
  align-items: center;
  font-size: 44px;
  line-height: 48px;
  font-weight: bold;
  color: #000;
}
.heading-second { margin-top: 55px; }
.marker { width: 24px; height: 48px; flex: none; margin-left: -1px; background: #539ff0; }
.pane-right .marker { width: 25px; margin-left: -3px; }
.heading-text { margin-left: 36px; padding-top: 3px; white-space: nowrap; -webkit-text-stroke: .5px #000; }
.pane-right .heading-text { margin-left: 37px; }
.heading-num { letter-spacing: 1px; }
.heading-line { flex: 1; height: 2px; margin-left: 15px; background: #eee; }
.row {
  height: 78px;
  margin: 0;
  padding: 1px 0 0 114px;
  font-size: 28px;
  line-height: 78px;
  white-space: nowrap;
  color: #333;
}
.pane-left .row { padding-left: 115px; }
.row b, .row-strong { font-weight: bold; }
.link { color: #136ec2; }

/* floating split-view actions */
.float-actions {
  position: absolute;
  left: 1262px;
  top: 156px;
  display: flex;
  gap: 13px;
}
.float-btn {
  width: 47px;
  height: 48px;
  border-radius: 50%;
  background: #f7f7f7;
  border: 1px solid #ddd;
  box-shadow: 0 1px 3px rgba(0, 0, 0, .14);
  display: flex;
  align-items: center;
  justify-content: center;
}
```
